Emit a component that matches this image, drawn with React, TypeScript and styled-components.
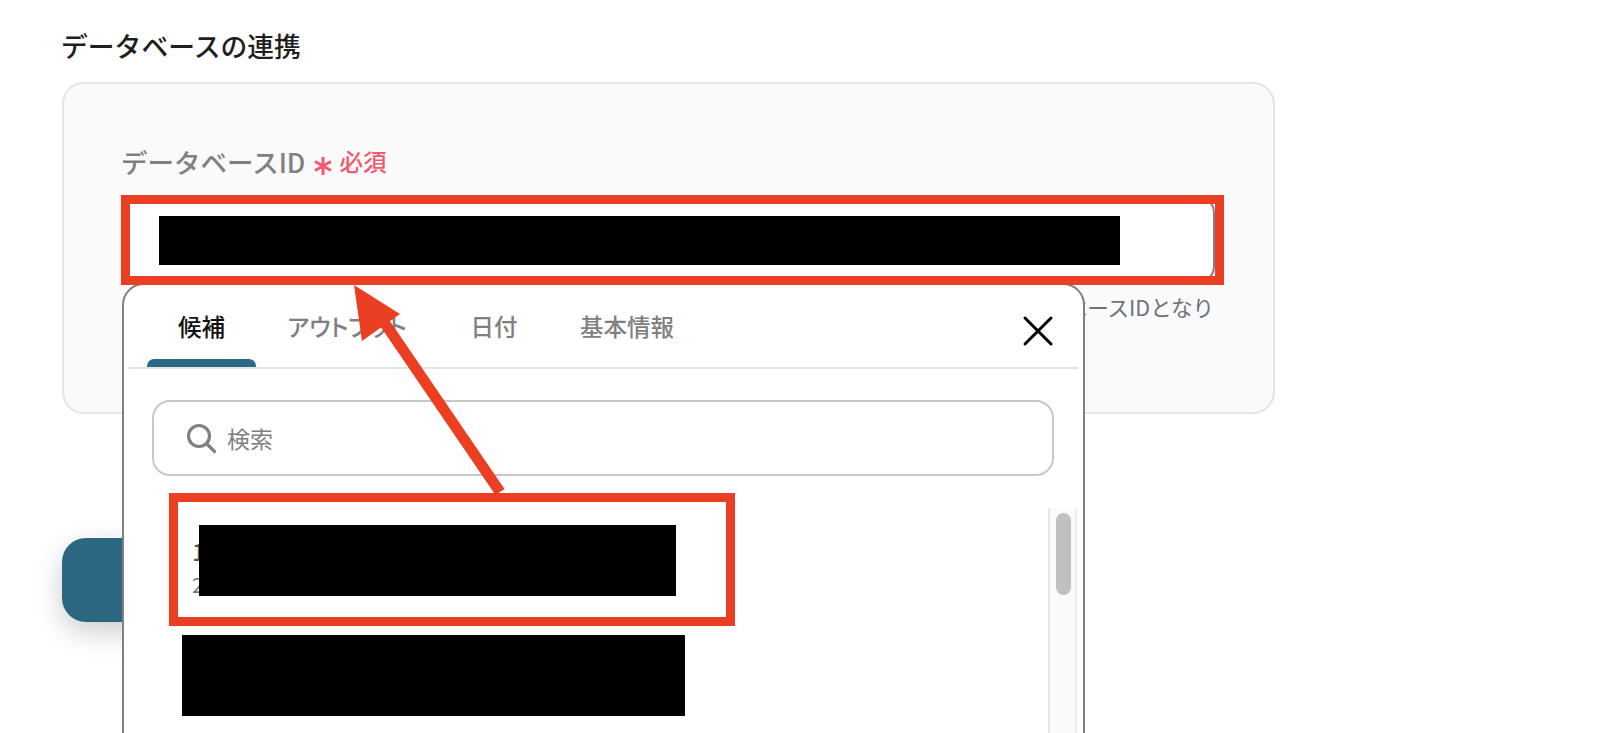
import React from 'react'
import styled, { createGlobalStyle } from 'styled-components'

const GlobalStyle = createGlobalStyle`
  html, body {
    margin: 0;
    padding: 0;
    height: 733px;
    overflow: hidden;
    background: #ffffff;
    font-family: "Noto Sans CJK JP", "Noto Sans", sans-serif;
  }
`

const Page = styled.div`
  position: relative;
  width: 1600px;
  height: 733px;
  overflow: hidden;
  padding: 27px 0 0 62px;
  box-sizing: border-box;
`

const Title = styled.h2`
  margin: 0 0 17px -1px;
  height: 38px;
  line-height: 38px;
  font-size: 26.8px;
  font-weight: 500;
  color: #1f1f1f;
`

const Card = styled.section`
  width: 1213px;
  height: 332px;
  box-sizing: border-box;
  padding: 55px 58px 0 57px;
  border: 2px solid #e3e5e8;
  border-radius: 22px;
  background: #fafafa;
`

const LabelRow = styled.div`
  display: flex;
  align-items: center;
  height: 44px;
  gap: 8px;
  margin-bottom: 12px;
`

const Label = styled.label`
  font-size: 26.5px;
  font-weight: 500;
  color: #808080;
`

const Required = styled.span`
  display: flex;
  align-items: center;
  gap: 6px;
  font-size: 23.5px;
  font-weight: 500;
  color: #ef5b6e;

  svg {
    margin-top: 10px;
  }
`

const InputShell = styled.div`
  height: 89px;
  box-sizing: border-box;
  border: 2px solid #808080;
  border-radius: 18px;
  background: #ffffff;
  padding: 19px 0 0 36px;
`

const Redaction = styled.div<{ $width: number; $height: number }>`
  width: ${({ $width }) => $width}px;
  height: ${({ $height }) => $height}px;
  background: #000000;
`

const Hint = styled.p`
  margin: 9px 1px 0 0;
  text-align: right;
  font-size: 21.5px;
  line-height: 28px;
  color: #6b7280;
  white-space: nowrap;
`

const SaveButton = styled.div`
  width: 240px;
  height: 84px;
  margin-top: 124px;
  border-radius: 24px;
  background: #2d6680;
  box-shadow: 0 10px 28px rgba(0, 0, 0, 0.2);
`

const Popover = styled.div`
  position: absolute;
  left: 122px;
  top: 283px;
  width: 963px;
  height: 520px;
  box-sizing: border-box;
  padding: 0 5px;
  border: 2px solid #808080;
  border-radius: 22px;
  background: #ffffff;
`

const TabBar = styled.div`
  display: flex;
  position: relative;
  height: 82px;
  padding-left: 18px;
  border-bottom: 2px solid #e2e3e5;
`

const Tab = styled.div<{ $active?: boolean; $width: number; $offset?: number }>`
  position: relative;
  width: ${({ $width }) => $width}px;
  margin-left: ${({ $offset }) => $offset ?? 0}px;
  padding-top: 21px;
  text-align: center;
  font-size: 23.5px;
  line-height: 40px;
  font-weight: 500;
  font-feature-settings: "palt";
  color: ${({ $active }) => ($active ? '#111111' : '#808080')};

  &::after {
    content: '';
    display: ${({ $active }) => ($active ? 'block' : 'none')};
    position: absolute;
    left: 0;
    right: 0;
    bottom: 0;
    height: 8px;
    border-radius: 7px 7px 0 0;
    background: #2a6a85;
  }
`

const CloseButton = styled.div`
  position: absolute;
  right: 24px;
  top: 30px;
  width: 32px;
  height: 32px;
`

const SearchBox = styled.div`
  display: flex;
  align-items: center;
  gap: 10px;
  width: 902px;
  height: 76px;
  box-sizing: border-box;
  margin: 31px 0 0 23px;
  padding-left: 31px;
  border: 2px solid #c8c8c8;
  border-radius: 18px;
  font-size: 23px;
  color: #808080;
`

const ListArea = styled.div`
  display: flex;
  justify-content: space-between;
  margin-top: 32px;
`

const CandidateList = styled.ul`
  list-style: none;
  margin: 0;
  padding: 17px 0 0 53px;
`

const Candidate = styled.li`
  position: relative;
  height: 110px;
  padding-left: 10px;
`

const CandidateName = styled.div`
  font-size: 24px;
  line-height: 36px;
  padding-top: 8px;
  font-weight: 500;
  color: #555555;
`

const CandidateDate = styled.div`
  font-size: 21px;
  line-height: 30px;
  color: #777777;
`

const CoverBlock = styled(Redaction)`
  position: absolute;
  left: 17px;
  top: 0;
`

const ScrollTrack = styled.div`
  width: 29px;
  height: 300px;
  box-sizing: border-box;
  margin-right: 1px;
  padding: 5px 6px 0 6px;
  border-left: 2px solid #e8e8e8;
  border-right: 2px solid #eeeeee;
  background: #fafafa;
`

const ScrollThumb = styled.div`
  width: 15px;
  height: 82px;
  border-radius: 8px;
  background: #c0c0c0;
`

const Highlight = styled.div<{ $left: number; $top: number; $width: number; $height: number }>`
  position: absolute;
  left: ${({ $left }) => $left}px;
  top: ${({ $top }) => $top}px;
  width: ${({ $width }) => $width}px;
  height: ${({ $height }) => $height}px;
  box-sizing: border-box;
  border: 9px solid #eb3f23;
`

const ArrowLayer = styled.svg`
  position: absolute;
  left: 0;
  top: 0;
  pointer-events: none;
`

export default function App() {
  return (
    <Page>
      <GlobalStyle />
      <Title>データベースの連携</Title>
      <Card>
        <LabelRow>
          <Label>データベースID</Label>
          <Required>
            <svg width="20" height="22" viewBox="0 0 20 22" fill="none" stroke="#ef5b6e" strokeWidth="3">
              <path d="M10 2v18M2 6.5l16 9M18 6.5L2 15.5" />
            </svg>
            必須
          </Required>
        </LabelRow>
        <InputShell>
          <Redaction $width={961} $height={49} />
        </InputShell>
        <Hint>データベースIDとなり</Hint>
      </Card>
      <SaveButton />

      <Popover>
        <TabBar>
          <Tab $active $width={109}>候補</Tab>
          <Tab $width={170} $offset={6}>アウトプット</Tab>
          <Tab $width={88} $offset={18}>日付</Tab>
          <Tab $width={130} $offset={24}>基本情報</Tab>
          <CloseButton>
            <svg width="32" height="32" viewBox="0 0 32 32" fill="none" stroke="#000000" strokeWidth="3" strokeLinecap="round">
              <path d="M3 3l26 26M29 3L3 29" />
            </svg>
          </CloseButton>
        </TabBar>
        <SearchBox>
          <svg width="32" height="32" viewBox="0 0 32 32" fill="none" stroke="#808080" strokeWidth="3.2" strokeLinecap="round">
            <circle cx="14" cy="14" r="10.5" />
            <path d="M22 22l7.5 7.5" />
          </svg>
          検索
        </SearchBox>
        <ListArea>
          <CandidateList>
            <Candidate>
              <CandidateName>1</CandidateName>
              <CandidateDate>2</CandidateDate>
              <CoverBlock $width={477} $height={71} />
            </Candidate>
            <li>
              <Redaction $width={503} $height={81} />
            </li>
          </CandidateList>
          <ScrollTrack>
            <ScrollThumb />
          </ScrollTrack>
        </ListArea>
      </Popover>

      <Highlight $left={121} $top={195} $width={1103} $height={90} />
      <Highlight $left={169} $top={493} $width={566} $height={133} />

      <ArrowLayer width="1600" height="733" viewBox="0 0 1600 733">
        <path d="M500 492L384 322" stroke="#eb3f23" strokeWidth="11" fill="none" />
        <path d="M354 285L400 314L362 341Z" fill="#eb3f23" />
      </ArrowLayer>
    </Page>
  )
}
